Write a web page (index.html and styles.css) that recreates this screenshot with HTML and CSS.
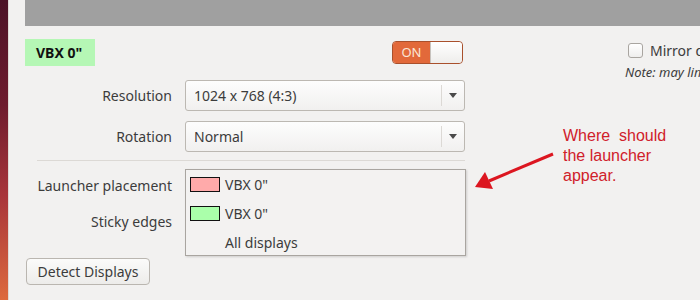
FILE: index.html
```html
<!DOCTYPE html>
<html lang="en">
<head>
	<meta charset="utf-8">
	<title>Displays</title>
	<link rel="stylesheet" href="styles.css">
</head>
<body>
	<div class="wallpaper"></div>
	<div class="window">
		<div class="topbar"></div>
		<div class="main">
			<div class="panel">
				<div class="head">
					<span class="name">VBX 0"</span>
					<div class="switch">
						<span class="on">ON</span>
						<span class="knob"></span>
					</div>
				</div>

				<div class="form">
					<label class="word">Resolution</label>
					<div class="select">
						<span class="value">1024 x 768 (4:3)</span>
						<span class="arrow"></span>
					</div>

					<label class="word">Rotation</label>
					<div class="select">
						<span class="value">Normal</span>
						<span class="arrow"></span>
					</div>
				</div>

				<div class="sep"></div>

				<div class="form lower">
					<label class="word">Launcher placement</label>
					<div class="cell">
						<!-- open dropdown -->
						<ul class="menu">
							<li><span class="swatch pink"></span>VBX 0"</li>
							<li><span class="swatch green"></span>VBX 0"</li>
							<li><span class="swatch none"></span>All displays</li>
						</ul>
					</div>

					<label class="word">Sticky edges</label>
					<div class="cell"></div>
				</div>

				<button class="detect">Detect Displays</button>
			</div>

			<div class="side">
				<div class="mirror">
					<span class="check"></span>
					<span>Mirror displays</span>
				</div>
				<div class="note">Note: may limit resolution options</div>
			</div>
		</div>
	</div>

	<div class="hint">
		<div>Where&nbsp; should</div>
		<div>the launcher</div>
		<div>appear.</div>
	</div>
	<svg class="hint-arrow" width="90" height="45" viewBox="0 0 90 45">
		<line x1="80" y1="4" x2="16" y2="31" stroke="#dc1620" stroke-width="3"/>
		<polygon points="2,37 12,22 20,39" fill="#dc1620"/>
	</svg>
</body>
</html>
```

FILE: styles.css
```css
*{
	margin:0;
	padding:0;
	box-sizing: border-box;
}

body {
	width: 700px;
	height: 300px;
	overflow: hidden;
	display: flex;
	background: #f2f1f0;
	font-family: "Noto Sans", "DejaVu Sans", sans-serif;
	font-size: 14px;
	color: #3c3c3c;
	position: relative;
}

.wallpaper {
	width: 8px;
	flex-shrink: 0;
	background: linear-gradient(to bottom, #4c1327 0%, #6e1c2e 35%, #a8353a 65%, #dd6a3e 100%);
}

.window {
	flex: 1;
	border-left: 1px solid #dedbd7;
	min-width: 0;
	overflow: hidden;
}

.topbar {
	margin-left: 16px;
	height: 26px;
	background: #a0a0a0;
}

.main {
	display: flex;
	padding-left: 16px;
}

.panel {
	width: 441px;
	flex-shrink: 0;
}

.head {
	margin-top: 13px;
	height: 27px;
	display: flex;
	justify-content: space-between;
	align-items: center;
}

.name {
	background: #b5f7b5;
	color: #111;
	font-weight: bold;
	font-size: 14px;
	line-height: 27px;
	padding: 0 11px;
	width: 70px;
	white-space: nowrap;
}

.switch {
	width: 71px;
	height: 23px;
	margin-right: 3px;
	display: flex;
	border: 1px solid #a9502c;
	border-radius: 4px;
	overflow: hidden;
}

.on {
	width: 37px;
	background: #e2693a;
	color: #fbe6d6;
	font-size: 13px;
	line-height: 21px;
	text-align: center;
}

.knob {
	flex: 1;
	background: linear-gradient(#ffffff, #eeedeb);
	border-left: 1px solid #c7c2bd;
	border-radius: 0 3px 3px 0;
}

.form {
	display: grid;
	grid-template-columns: 147px 281px;
	column-gap: 13px;
	row-gap: 10px;
	margin-top: 14px;
	align-items: center;
}

.word {
	text-align: right;
}

.select {
	height: 31px;
	display: flex;
	align-items: center;
	border: 1px solid #bcb8b2;
	border-radius: 3px;
	background: linear-gradient(#fdfdfd, #f1f0ef);
	width: 280px;
}

.value {
	flex: 1;
	padding-left: 8px;
}

.arrow {
	width: 23px;
	height: 21px;
	border-left: 1px solid #dcd9d5;
	position: relative;
}

.arrow::after {
	content: "";
	position: absolute;
	left: 7px;
	top: 8px;
	border-left: 4px solid transparent;
	border-right: 4px solid transparent;
	border-top: 5px solid #4a4a4a;
}

.sep {
	margin: 8px 1px 0 12px;
	height: 1px;
	background: #dcd9d5;
}

.lower {
	margin-top: 6px;
	row-gap: 0;
	grid-auto-rows: 36px;
}

.cell {
	position: relative;
	height: 36px;
}

.menu {
	list-style: none;
	position: absolute;
	left: 0;
	top: 2px;
	width: 281px;
	height: 87px;
	background: #f3f2f1;
	border: 1px solid #a9a5a0;
	box-shadow: 1px 1px 2px rgba(0,0,0,0.15);
	z-index: 2;
}

.menu li {
	height: 29px;
	display: flex;
	align-items: center;
	padding-left: 4px;
}

.swatch {
	width: 30px;
	height: 15px;
	margin-right: 5px;
	border: 1px solid #111;
}

.pink {
	background: #ffaaaa;
}

.green {
	background: #aaffaa;
}

.none {
	border: none;
}

.detect {
	margin-top: 19px;
	margin-left: 1px;
	width: 124px;
	height: 27px;
	font-family: inherit;
	font-size: 14px;
	color: #3c3c3c;
	border: 1px solid #bab6b0;
	border-radius: 4px;
	background: linear-gradient(#fbfbfa, #edecea);
}

.side {
	margin-left: 162px;
	margin-top: 16px;
	white-space: nowrap;
}

.mirror {
	display: flex;
	align-items: center;
	gap: 7px;
	height: 17px;
}

.check {
	width: 15px;
	height: 15px;
	border: 1px solid #a9a5a0;
	border-radius: 3px;
	background: linear-gradient(#ffffff, #efeeed);
}

.note {
	margin-top: 4px;
	margin-left: -3px;
	font-style: italic;
	font-size: 13px;
}

.hint {
	position: absolute;
	left: 563px;
	top: 126px;
	width: 130px;
	text-align: left;
	font-family: "Liberation Sans", Arial, sans-serif;
	font-size: 16px;
	line-height: 20px;
	color: #d0202a;
	white-space: nowrap;
}

.hint-arrow {
	position: absolute;
	left: 473px;
	top: 150px;
}
```
